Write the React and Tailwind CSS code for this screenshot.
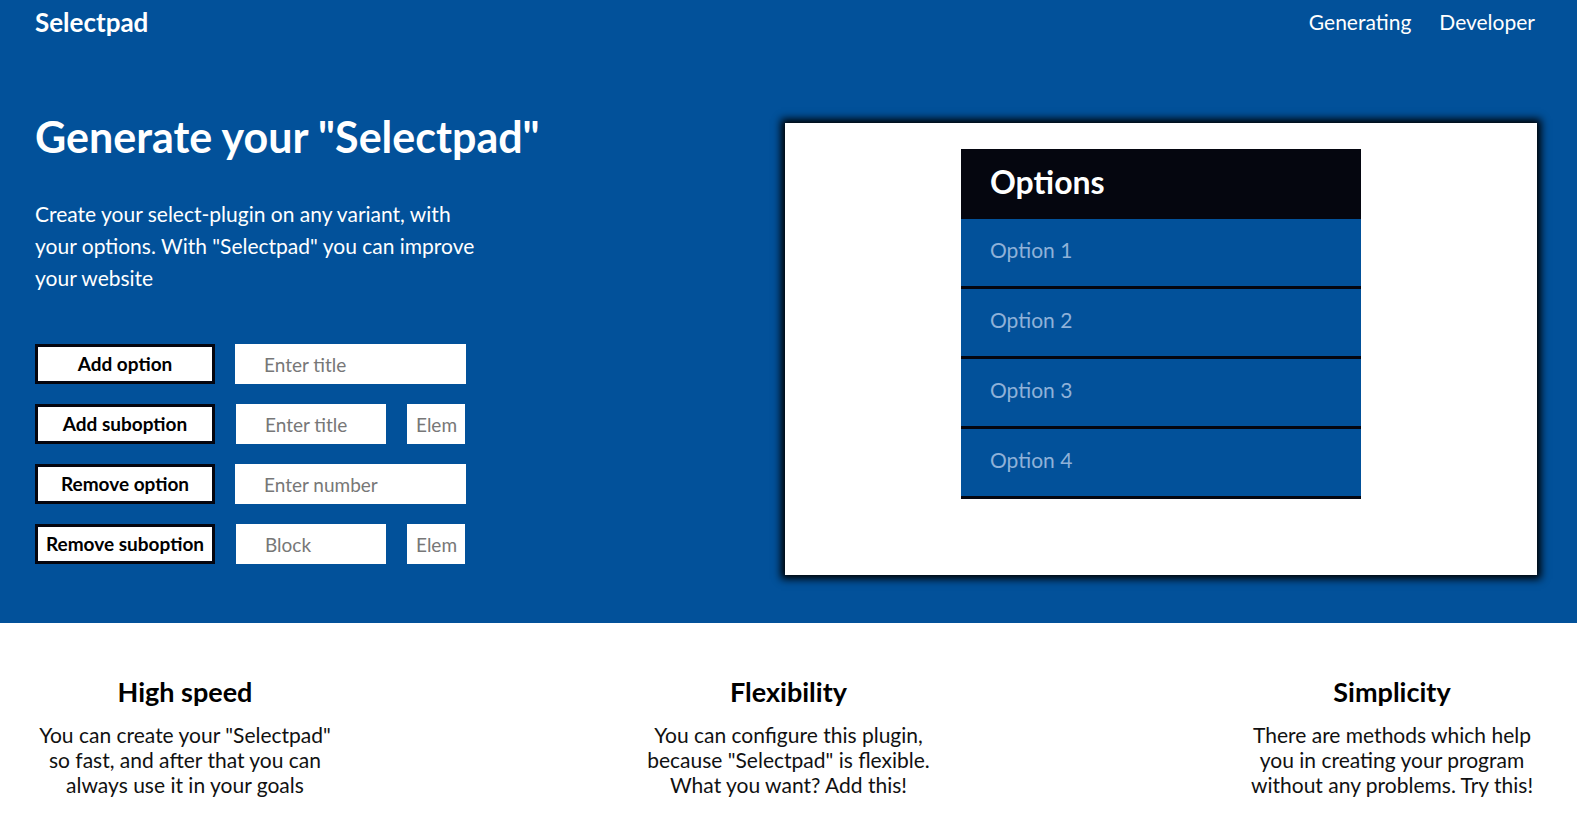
import React from "react";

const font = { fontFamily: "Lato, 'Open Sans', sans-serif" };

const Feature = ({ title, lines }) => (
  <div className="w-[300px] flex flex-col items-center text-center">
    <h3 className="text-[27px] font-bold text-black leading-[32px]">{title}</h3>
    <p className="mt-[14px] text-[21px] leading-[25px] text-[#111]">
      {lines.map((l, i) => (
        <span key={i} className="block whitespace-nowrap">
          {l}
        </span>
      ))}
    </p>
  </div>
);

const ActionButton = ({ children }) => (
  <button className="w-[180px] h-[40px] border-[3px] border-[#05060f] bg-white text-[19px] font-bold text-black">
    {children}
  </button>
);

const Field = ({ placeholder, className }) => (
  <input
    placeholder={placeholder}
    className={`h-[40px] bg-white pl-[29px] text-[19px] text-black placeholder:text-[#777] outline-none ${className}`}
  />
);

export default function App() {
  const options = ["Option 1", "Option 2", "Option 3", "Option 4"];

  return (
    <div className="min-h-screen bg-white" style={font}>
      {/* hero */}
      <div className="bg-[#02519a] h-[623px] flex flex-col">
        <header className="flex justify-between items-center px-[35px] h-[44px]">
          <span className="text-white text-[26px] font-bold">Selectpad</span>
          <nav className="flex gap-[28px] text-white text-[21px] pr-[7px]">
            <a>Generating</a>
            <a>Developer</a>
          </nav>
        </header>

        <div className="flex px-[35px] mt-[66px]">
          <div className="w-[750px]">
            <h1 className="text-white text-[43px] font-bold leading-[54px]">
              Generate your "Selectpad"
            </h1>
            <p className="mt-[34px] text-white text-[21px] leading-[32px] w-[450px]">
              Create your select-plugin on any variant, with your options. With "Selectpad" you can improve your website
            </p>

            <div className="mt-[50px] flex flex-col gap-[20px]">
              <div className="flex gap-[20px]">
                <ActionButton>Add option</ActionButton>
                <Field placeholder="Enter title" className="w-[231px]" />
              </div>
              <div className="flex gap-[21px]">
                <ActionButton>Add suboption</ActionButton>
                <Field placeholder="Enter title" className="w-[150px]" />
                <Field placeholder="Elem" className="w-[58px] !pl-[9px]" />
              </div>
              <div className="flex gap-[20px]">
                <ActionButton>Remove option</ActionButton>
                <Field placeholder="Enter number" className="w-[231px]" />
              </div>
              <div className="flex gap-[21px]">
                <ActionButton>Remove suboption</ActionButton>
                <Field placeholder="Block" className="w-[150px]" />
                <Field placeholder="Elem" className="w-[58px] !pl-[9px]" />
              </div>
            </div>
          </div>

          <div className="mt-[13px] w-[752px] h-[452px] bg-white shadow-[0_0_8px_4px_#000] flex justify-center pt-[26px]">
            <div className="w-[400px] self-start">
              <div className="h-[70px] bg-[#05060f] flex items-center pl-[29px] pb-[4px]">
                <span className="text-white text-[32px] font-bold">Options</span>
              </div>
              {options.map((o) => (
                <div
                  key={o}
                  className="h-[70px] bg-[#02519a] border-b-[3px] border-[#05060f] flex items-center pl-[29px] pb-[5px]"
                >
                  <span className="text-[#8fb1d8] text-[21px]">{o}</span>
                </div>
              ))}
            </div>
          </div>
        </div>
      </div>

      {/* features */}
      <div className="flex justify-between px-[35px] pt-[53px]">
        <Feature
          title="High speed"
          lines={['You can create your "Selectpad"', "so fast, and after that you can", "always use it in your goals"]}
        />
        <Feature
          title="Flexibility"
          lines={["You can configure this plugin,", 'because "Selectpad" is flexible.', "What you want? Add this!"]}
        />
        <Feature
          title="Simplicity"
          lines={["There are methods which help", "you in creating your program", "without any problems. Try this!"]}
        />
      </div>
    </div>
  );
}
